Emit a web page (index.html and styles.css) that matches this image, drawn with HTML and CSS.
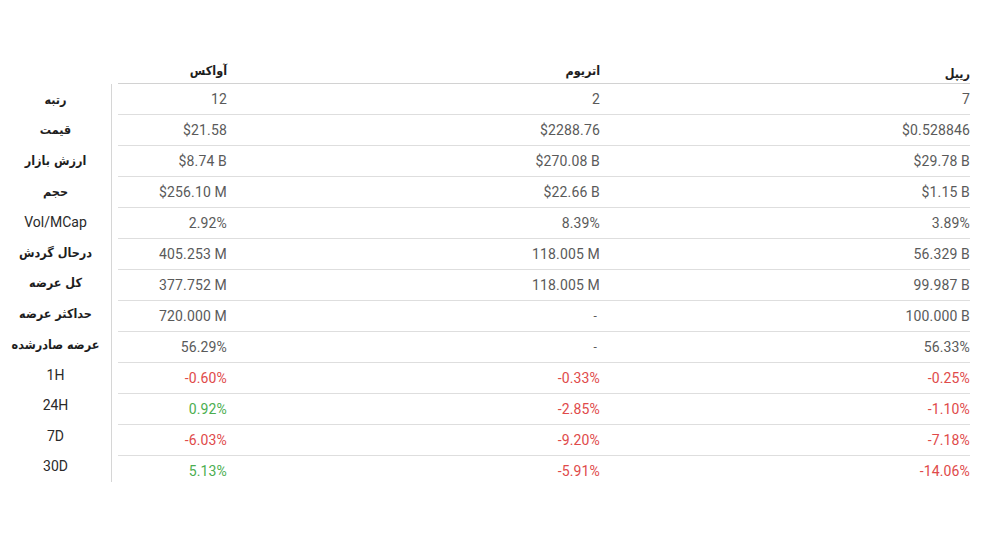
FILE: index.html
```html
<!DOCTYPE html>
<html lang="fa">
<head>
<meta charset="utf-8">
<title>مقایسه ارزها</title>
<link rel="stylesheet" href="styles.css">
</head>
<body>
<div class="sheet">
  <div class="labels">
    <div class="label fa">رتبه</div>
    <div class="label fa">قیمت</div>
    <div class="label fa">ارزش بازار</div>
    <div class="label fa">حجم</div>
    <div class="label">Vol/MCap</div>
    <div class="label fa">درحال گردش</div>
    <div class="label fa">کل عرضه</div>
    <div class="label fa">حداکثر عرضه</div>
    <div class="label fa">عرضه صادرشده</div>
    <div class="label">1H</div>
    <div class="label">24H</div>
    <div class="label">7D</div>
    <div class="label">30D</div>
  </div>
  <div class="table">
    <div class="row head">
      <div class="cell c1 fa">آواکس</div>
      <div class="cell c2 fa">اتریوم</div>
      <div class="cell c3 fa">ریپل</div>
    </div>
    <div class="row"><div class="cell c1">12</div><div class="cell c2">2</div><div class="cell c3">7</div></div>
    <div class="row"><div class="cell c1">$21.58</div><div class="cell c2">$2288.76</div><div class="cell c3">$0.528846</div></div>
    <div class="row"><div class="cell c1">$8.74 B</div><div class="cell c2">$270.08 B</div><div class="cell c3">$29.78 B</div></div>
    <div class="row"><div class="cell c1">$256.10 M</div><div class="cell c2">$22.66 B</div><div class="cell c3">$1.15 B</div></div>
    <div class="row"><div class="cell c1">2.92%</div><div class="cell c2">8.39%</div><div class="cell c3">3.89%</div></div>
    <div class="row"><div class="cell c1">405.253 M</div><div class="cell c2">118.005 M</div><div class="cell c3">56.329 B</div></div>
    <div class="row"><div class="cell c1">377.752 M</div><div class="cell c2">118.005 M</div><div class="cell c3">99.987 B</div></div>
    <div class="row"><div class="cell c1">720.000 M</div><div class="cell c2 dash">-</div><div class="cell c3">100.000 B</div></div>
    <div class="row"><div class="cell c1">56.29%</div><div class="cell c2 dash">-</div><div class="cell c3">56.33%</div></div>
    <div class="row"><div class="cell c1 neg">-0.60%</div><div class="cell c2 neg">-0.33%</div><div class="cell c3 neg">-0.25%</div></div>
    <div class="row"><div class="cell c1 pos">0.92%</div><div class="cell c2 neg">-2.85%</div><div class="cell c3 neg">-1.10%</div></div>
    <div class="row"><div class="cell c1 neg">-6.03%</div><div class="cell c2 neg">-9.20%</div><div class="cell c3 neg">-7.18%</div></div>
    <div class="row last"><div class="cell c1 pos">5.13%</div><div class="cell c2 neg">-5.91%</div><div class="cell c3 neg">-14.06%</div></div>
  </div>
</div>
</body>
</html>
```
FILE: styles.css
```css
html, body {
  margin: 0;
  padding: 0;
  background: #ffffff;
}
body {
  font-family: Roboto, "DejaVu Sans", sans-serif;
  font-size: 14px;
  color: #5a5a5a;
}
.sheet {
  display: flex;
  align-items: flex-start;
  padding-top: 57px;
}
.labels {
  width: 111px;
  margin-top: 27px;
  border-right: 1px solid #d6d6d6;
}
.label {
  height: 30.6px;
  display: flex;
  align-items: center;
  justify-content: center;
  color: #2a2a2a;
  font-size: 14px;
}
.label.fa {
  font-family: "DejaVu Sans Condensed", "DejaVu Sans", sans-serif;
  font-stretch: condensed;
  font-weight: bold;
  font-size: 12.5px;
  color: #1e1e1e;
}
.table {
  margin-left: 6px;
  width: 852px;
}
.row {
  display: grid;
  grid-template-columns: 109px 373px 370px;
  height: 30px;
  align-items: center;
  border-bottom: 1px solid #dedede;
}
.row.head {
  height: 26px;
  border-bottom: 1px solid #d2d2d2;
}
.row.last {
  border-bottom: none;
}
.cell {
  text-align: right;
  white-space: nowrap;
  letter-spacing: 0.15px;
}
.head .cell {
  font-family: "DejaVu Sans Condensed", "DejaVu Sans", sans-serif;
  font-stretch: condensed;
  font-weight: bold;
  font-size: 12.5px;
  letter-spacing: 0;
  color: #1e1e1e;
}
.head .c3 {
  padding-top: 6px;
}
.dash {
  font-size: 12px;
  padding-right: 3px;
}
.neg {
  color: #e04a4a;
}
.pos {
  color: #4cae50;
}
```
